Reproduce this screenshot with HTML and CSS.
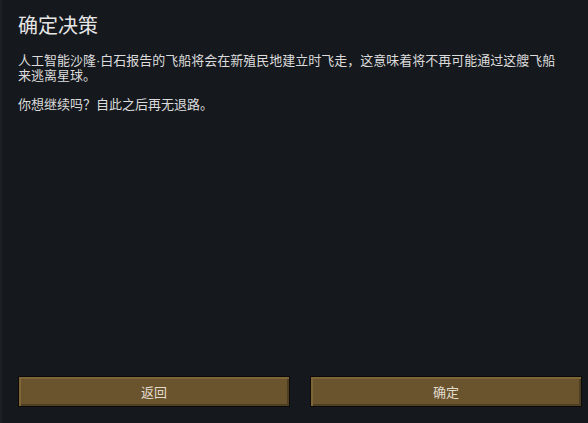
FILE: index.html
```html
<!DOCTYPE html>
<html lang="zh">
<head>
<meta charset="utf-8">
<link rel="stylesheet" href="styles.css">
</head>
<body>
<div class="dialog">
  <h1 class="title">确定决策</h1>
  <div class="body">
    <p class="para">人工智能沙隆<span class="dot">·</span>白石报告的飞船将会在新殖民地建立时飞走，这意味着将不再可能通过这艘飞船来逃离星球。</p>
    <p class="para">你想继续吗？自此之后再无退路。</p>
  </div>
  <div class="buttons">
    <button class="btn">返回</button>
    <button class="btn">确定</button>
  </div>
</div>
</body>
</html>
```
FILE: styles.css
```css
html, body {
  margin: 0;
  padding: 0;
  width: 588px;
  height: 423px;
  background: #15181d;
  overflow: hidden;
}
body {
  font-family: "Noto Sans CJK SC", "Noto Sans", sans-serif;
  color: #dcdcdc;
}
.dialog {
  box-sizing: border-box;
  height: 423px;
  padding: 11px 6px 16px 18px;
  display: flex;
  flex-direction: column;
  box-shadow: inset 2px 0 0 #1c2025;
}
.title {
  margin: 0;
  font-size: 20px;
  font-weight: normal;
  line-height: 28px;
  color: #e6e6e6;
}
.body {
  flex: 1;
  margin-top: 14px;
  width: 548px;
}
.para {
  margin: 0 0 15px 0;
  font-size: 13px;
  line-height: 14px;
}
.dot {
  font-family: "Liberation Sans", sans-serif;
}
.buttons {
  display: flex;
  gap: 20px;
}
.btn {
  flex: 1;
  height: 31px;
  font-family: inherit;
  font-size: 13px;
  color: #e2dccf;
  background: #6a542e;
  border: 1px solid #0c0b09;
  box-shadow: inset 2px 2px 0 #7d6538, inset -2px -2px 0 #4e3e22;
  padding: 0;
}
```
